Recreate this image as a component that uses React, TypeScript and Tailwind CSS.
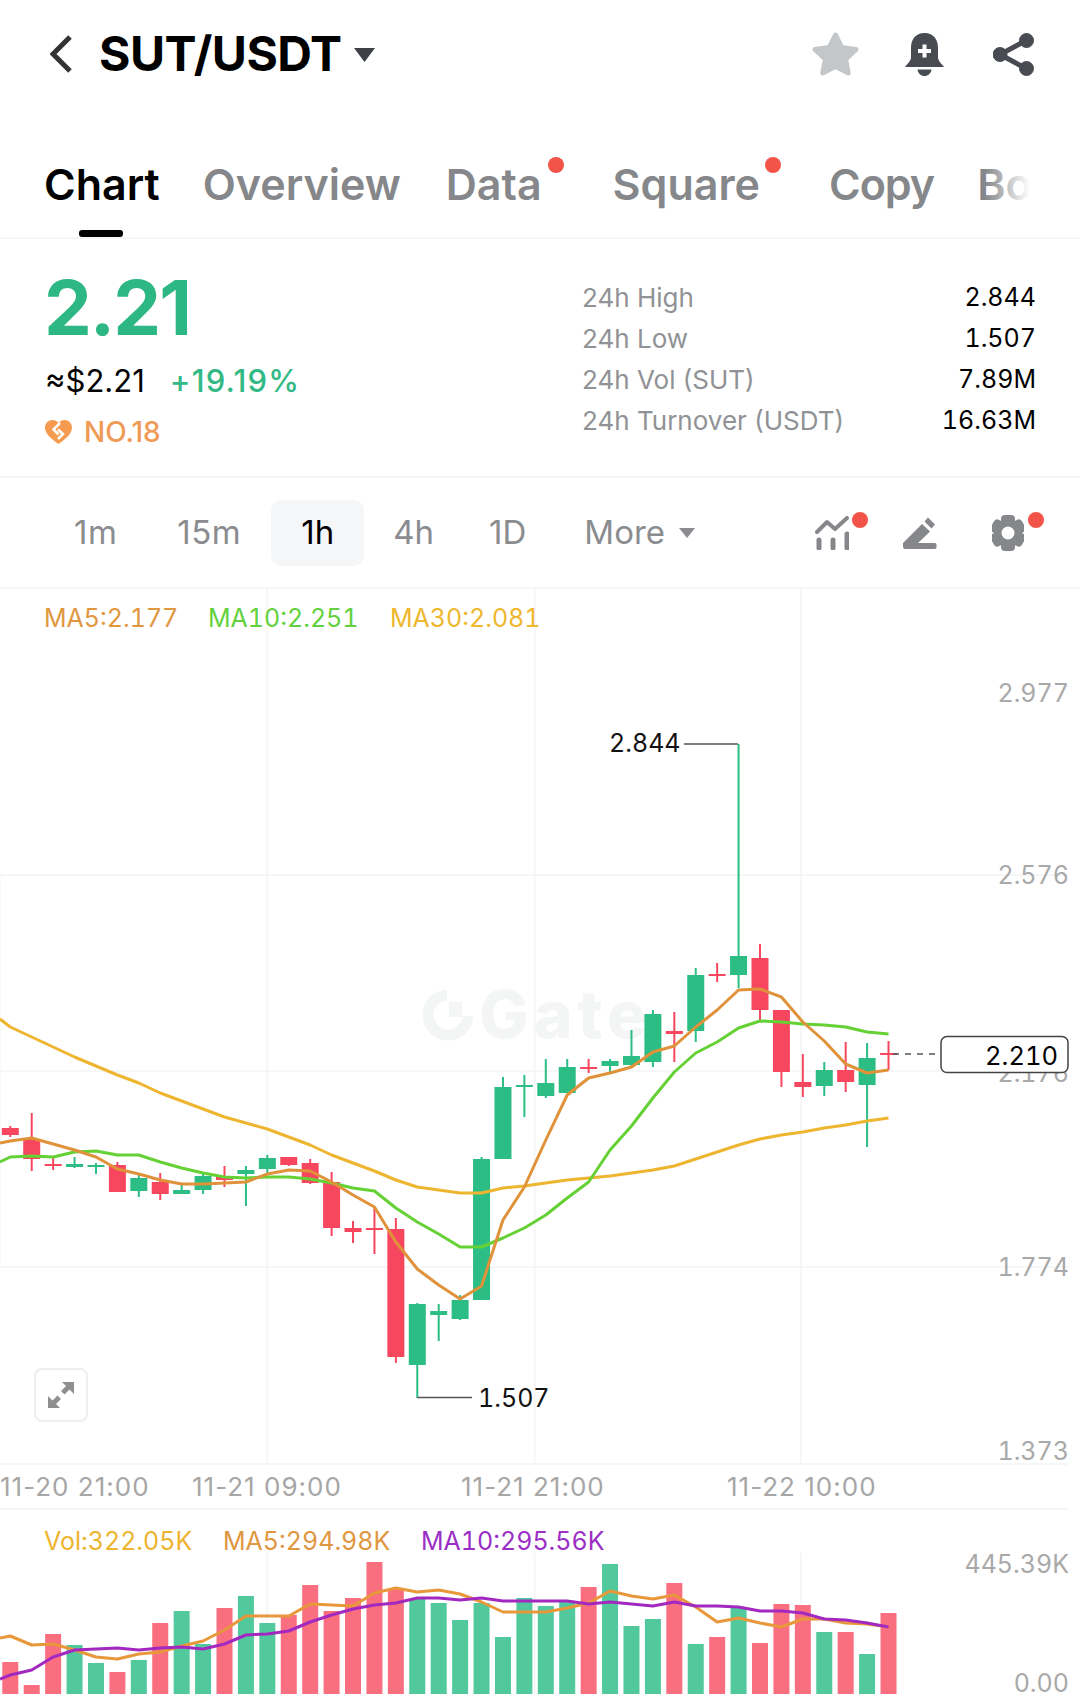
const X = (i: number) => 10.3 + 21.42 * i;
const RED = "#f6475f";
const GREEN = "#2cbd85";

// [wickTop, bodyTop, bodyBottom, wickBottom, up]
const candles: [number, number, number, number, number][] = [
  [1126, 1128, 1135, 1137, 0], [1113, 1139, 1159, 1171, 0], [1158, 1164, 1166, 1170, 0], [1157, 1164, 1167, 1168, 1],
  [1163, 1165, 1167, 1174, 1], [1162, 1165, 1192, 1192, 0], [1175, 1178, 1191, 1197, 1], [1173, 1182, 1194, 1200, 0],
  [1185, 1190, 1194, 1194, 1], [1174, 1176, 1190, 1194, 1], [1166, 1176, 1180, 1187, 0], [1166, 1170, 1174, 1206, 1],
  [1155, 1158, 1169, 1173, 1], [1157, 1157, 1165, 1166, 0], [1159, 1163, 1183, 1184, 0], [1172, 1182, 1228, 1236, 0],
  [1221, 1228, 1232, 1243, 0], [1208, 1228, 1230, 1254, 0], [1218, 1229, 1357, 1363, 0], [1303, 1304, 1365, 1398, 1],
  [1304, 1311, 1315, 1341, 1], [1295, 1300, 1319, 1320, 1], [1157, 1159, 1300, 1300, 1], [1077, 1087, 1159, 1159, 1],
  [1075, 1085, 1087, 1117, 1], [1059, 1083, 1096, 1098, 1], [1059, 1067, 1093, 1093, 1], [1059, 1067, 1069, 1073, 0],
  [1059, 1061, 1066, 1072, 1], [1030, 1056, 1065, 1066, 1], [1010, 1014, 1062, 1067, 1], [1012, 1031, 1034, 1062, 0],
  [968, 975, 1031, 1042, 1], [963, 974, 976, 982, 0], [744, 956, 975, 988, 1], [944, 958, 1010, 1020, 0],
  [1010, 1010, 1072, 1087, 0], [1054, 1082, 1087, 1097, 0], [1062, 1070, 1086, 1096, 1], [1042, 1070, 1082, 1092, 0],
  [1043, 1058, 1085, 1147, 1], [1041, 1053, 1055, 1070, 0],
];

// first value is the line at x=0
const ma5 = [1143, 1141, 1138, 1144, 1150, 1157, 1169, 1174, 1180, 1184, 1184, 1183, 1182, 1174, 1170, 1171, 1182, 1195, 1207, 1242, 1269, 1285, 1299, 1286, 1220, 1187, 1140, 1095, 1078, 1073, 1067, 1052, 1046, 1027, 1010, 990, 989, 997, 1022, 1041, 1064, 1073, 1070];
const ma10 = [1162, 1157, 1156, 1157, 1152, 1151, 1155, 1155, 1162, 1168, 1173, 1177, 1178, 1177, 1177, 1179, 1183, 1188, 1191, 1208, 1222, 1234, 1247, 1247, 1238, 1228, 1215, 1198, 1182, 1150, 1126, 1098, 1072, 1053, 1042, 1028, 1021, 1022, 1024, 1025, 1027, 1032, 1034];
const ma30 = [1019, 1027, 1037, 1047, 1057, 1066, 1075, 1083, 1093, 1101, 1109, 1117, 1123, 1129, 1137, 1145, 1155, 1163, 1171, 1180, 1187, 1190, 1193, 1193, 1188, 1186, 1183, 1180, 1178, 1176, 1173, 1170, 1166, 1159, 1152, 1145, 1139, 1135, 1132, 1128, 1125, 1121, 1118];

// page y of the volume bars
const volumes = [1662, 1685, 1634, 1645, 1663, 1672, 1660, 1623, 1611, 1644, 1608, 1596, 1623, 1615, 1585, 1611, 1598, 1562, 1589, 1599, 1603, 1620, 1603, 1637, 1598, 1606, 1602, 1587, 1564, 1626, 1619, 1583, 1644, 1637, 1608, 1643, 1604, 1605, 1632, 1632, 1654, 1613];
const volUp = [0, 0, 0, 1, 1, 0, 1, 0, 1, 1, 0, 1, 1, 0, 0, 0, 0, 0, 0, 1, 1, 1, 1, 1, 1, 1, 1, 0, 1, 1, 1, 0, 1, 0, 1, 0, 0, 0, 1, 0, 1, 0];
const volMa5 = [1638, 1636, 1645, 1644, 1650, 1657, 1659, 1654, 1652, 1646, 1641, 1630, 1616, 1616, 1616, 1604, 1605, 1606, 1593, 1588, 1592, 1590, 1594, 1602, 1612, 1612, 1612, 1608, 1603, 1591, 1596, 1599, 1595, 1607, 1622, 1618, 1623, 1627, 1619, 1619, 1623, 1624, 1627];
const volMa10 = [1679, 1675, 1670, 1657, 1650, 1649, 1648, 1650, 1648, 1647, 1649, 1644, 1635, 1634, 1631, 1622, 1615, 1609, 1605, 1603, 1598, 1598, 1600, 1598, 1601, 1601, 1601, 1601, 1604, 1602, 1604, 1606, 1602, 1606, 1606, 1607, 1611, 1611, 1613, 1619, 1620, 1623, 1627];

function linePoints(values: number[]) {
  return values.map((y, i) => `${i === 0 ? 0 : X(i - 1)},${y}`).join(" ");
}

function Dot({ className }: { className: string }) {
  return <span className={`absolute w-4 h-4 rounded-full bg-[#f2544a] ${className}`} />;
}

function Header() {
  return (
    <div className="h-[104px] flex items-center pt-1 pl-[50px] pr-[46px]">
      <svg width="24" height="38" viewBox="0 0 24 38" fill="none" stroke="#333" strokeWidth="5">
        <path d="M20 2 3 19l17 17" />
      </svg>
      <span className="ml-[25px] text-[48px] font-bold text-black leading-none tracking-[-0.5px]">SUT/USDT</span>
      <svg className="ml-3 mt-[2px]" width="21" height="14" viewBox="0 0 21 14" fill="#3d4046">
        <path d="M0 0h21L10.5 14z" />
      </svg>
      <div className="ml-auto flex items-center">
        <svg width="47" height="44" viewBox="0 0 47 44" fill="#c4c7ca" stroke="#c4c7ca" strokeWidth="5" strokeLinejoin="round">
          <path d="M23.5 3 29.8 15.6 44 17.5 33.6 27.3 36.2 41 23.5 34.4 10.8 41 13.4 27.3 3 17.5 17.2 15.6z" />
        </svg>
        <svg className="ml-[46px]" width="39" height="43" viewBox="0 0 39 43" fill="#484b51">
          <path d="M19.5 0C10 0 6 7 6 15v9c0 4-3 6-6 10h39c-3-4-6-6-6-10v-9C33 7 29 0 19.5 0zM12.5 36.500h14c-.5 4-3.500 6.500-7 6.500s-6.500-2.500-7-6.500z" />
          <path fill="#fff" d="M17.500 11.500h4v4.500H26v4h-4.500v4.500h-4V20H13v-4h4.500z" />
        </svg>
        <svg className="ml-[49px]" width="41" height="43" viewBox="0 0 41 43" fill="#484b51" stroke="#484b51">
          <path d="M33 7.500 7 21.500l26 14" fill="none" strokeWidth="5" />
          <circle cx="33.500" cy="7.500" r="7" strokeWidth="1" />
          <circle cx="33.500" cy="35.500" r="7" strokeWidth="1" />
          <circle cx="7" cy="21.500" r="7" strokeWidth="1" />
        </svg>
      </div>
    </div>
  );
}

function Tabs() {
  return (
    <div className="relative h-[135px] border-b-2 border-[#f5f6f6] flex items-start pl-[44px] pt-[54px] gap-[43px] text-[43px] leading-[52px] font-semibold text-[#85878a] overflow-hidden">
      <span className="relative text-black">
        Chart
        <span className="absolute left-[35px] top-[72px] w-[44px] h-[7px] rounded-[3px] bg-black" />
      </span>
      <span className="mr-[2px]">Overview</span>
      <span className="relative pr-[22px] mr-[6px]">
        Data
        <Dot className="right-0 top-[-1px]" />
      </span>
      <span className="relative pr-[21px] mr-[5px]">
        Square
        <Dot className="right-0 top-[-1px]" />
      </span>
      <span className="tracking-[-1px]">Copy</span>
      <span>Bo</span>
      <div className="absolute right-[50px] top-0 bottom-0 w-[45px] bg-gradient-to-r from-transparent to-white" />
      <div className="absolute right-0 top-0 bottom-0 w-[50px] bg-white" />
    </div>
  );
}

function Stats() {
  const rows = [
    ["24h High", "2.844"],
    ["24h Low", "1.507"],
    ["24h Vol (SUT)", "7.89M"],
    ["24h Turnover (USDT)", "16.63M"],
  ];
  return (
    <div className="h-[239px] border-b-2 border-[#f5f6f6] flex pl-[45px] pr-[44px]">
      <div className="w-[537px] pt-[26px]">
        <div className="text-[76px] leading-[84px] font-bold text-[#2cb784] tracking-[-2px] -ml-px">2.21</div>
        <div className="flex items-center mt-[12px] text-[31px] leading-[40px] gap-[25px]">
          <span className="text-black">≈$2.21</span>
          <span className="text-[#33b985] font-medium tracking-[1.2px]">+19.19%</span>
        </div>
        <div className="flex items-center mt-[13px] gap-[12px] text-[28px] leading-[36px] font-medium text-[#ef9a55]">
          <svg width="27" height="24" viewBox="0 0 27 24">
            <path fill="#f59a4f" d="M13.500 24C8 20 0 14.500 0 7.500 0 3 3.500 0 7.500 0c2.500 0 4.500 1 6 3 1.500-2 3.500-3 6-3C23.500 0 27 3 27 7.500 27 14.500 19 20 13.500 24z" />
            <path fill="none" stroke="#fff" strokeWidth="2.500" d="M15 3 8.500 9.500l5 5M13 9.500l5 4.500-5 5" />
          </svg>
          <span>NO.18</span>
        </div>
      </div>
      <div className="flex-1 pt-[38px] text-[26px] leading-[41px]">
        {rows.map(([label, value]) => (
          <div key={label} className="flex justify-between">
            <span className="text-[#909295]">{label}</span>
            <span className="text-black text-[25px] tabular-nums">{value}</span>
          </div>
        ))}
      </div>
    </div>
  );
}

function Intervals() {
  return (
    <div className="h-[111px] border-b-2 border-[#f5f6f6] flex items-center text-[33px] text-[#8a8c8f]">
      <span className="ml-[74px] tracking-[0.5px]">1m</span>
      <span className="ml-[60px] tracking-[0.5px]">15m</span>
      <span className="ml-[30px] w-[93px] h-[66px] rounded-[10px] bg-[#f5f6f7] text-black flex items-center justify-center">1h</span>
      <span className="ml-[29px]">4h</span>
      <span className="ml-[55px]">1D</span>
      <span className="ml-[58px]">More</span>
      <svg className="ml-[14px]" width="16" height="10" viewBox="0 0 16 10" fill="#8a8c8f">
        <path d="M0 0h16L8 10z" />
      </svg>
      <span className="relative ml-[120px] w-[34px] h-[34px]">
        <svg width="34" height="34" viewBox="0 0 34 34" fill="none" stroke="#85878a" strokeWidth="4" strokeLinecap="round">
          <path d="M2 16 12 6l8 7L32 2" strokeLinejoin="round" />
          <path d="M4 24v8M18 24v8M32 18v14" strokeWidth="5" />
        </svg>
        <Dot className="left-[37px] top-[-4px]" />
      </span>
      <svg className="ml-[54px]" width="34" height="34" viewBox="0 0 34 34" fill="#85878a">
        <path d="M0 27 19 8l8 7.500L15 27h17q1.500 0 1.500 2v2q0 2-1.500 2H2q-2 0-2-2z" />
        <path d="M21.500 5.500 25 1.500l7 7-3.500 4z" />
      </svg>
      <span className="relative ml-[55px] w-[32px] h-[36px]">
        <svg width="32" height="36" viewBox="0 0 32 36" fill="#85878a">
          <rect x="9" y="0" width="14" height="36" rx="4" />
          <rect x="9" y="0" width="14" height="36" rx="4" transform="rotate(60 16 18)" />
          <rect x="9" y="0" width="14" height="36" rx="4" transform="rotate(120 16 18)" />
          <circle cx="16" cy="18" r="12" />
          <circle cx="16" cy="18" r="6.500" fill="#fff" />
        </svg>
        <Dot className="left-[36px] top-[-3px]" />
      </span>
    </div>
  );
}

function PriceChart() {
  return (
    <div className="relative h-[874px]">
      <svg className="block overflow-visible tabular-nums" width="1080" height="874" viewBox="0 589 1080 874">
        <line x1="0.5" x2="0.5" y1="875" y2="1267" stroke="#f8f9f9" strokeWidth="1" />
        {[267, 534.7, 801].map((x) => (
          <line key={x} x1={x} x2={x} y1="589" y2="1463" stroke="#f3f4f5" strokeWidth="1.500" />
        ))}
        {[875.3, 1071, 1267].map((y) => (
          <line key={y} x1="0" x2="1068" y1={y} y2={y} stroke="#f3f4f5" strokeWidth="1.500" />
        ))}

        {/* watermark */}
        <path d="M447 995a20 20 0 1 0 21 21" fill="none" stroke="#f4f5f5" strokeWidth="11" />
        <rect x="449" y="1002" width="13" height="15" fill="#f4f5f5" />
        <text x="479" y="1038" fontSize="66" fontWeight="800" letterSpacing="5" fill="#f4f5f5">Gate</text>

        <text x="44" y="627" fontSize="25" fill="#e0973f">MA5:2.177</text>
        <text x="208" y="627" fontSize="25" fill="#63d13d">MA10:2.251</text>
        <text x="390" y="627" fontSize="25" fill="#eeb72f">MA30:2.081</text>

        <g fontSize="25" fill="#a9a9a9" textAnchor="end">
          <text x="1069" y="702">2.977</text>
          <text x="1069" y="884">2.576</text>
          <text x="1069" y="1082">2.176</text>
          <text x="1069" y="1276">1.774</text>
          <text x="1069" y="1460">1.373</text>
        </g>

        {candles.map(([top, bodyTop, bodyBottom, bottom, up], i) => {
          const color = up ? GREEN : RED;
          return (
            <g key={i} fill={color}>
              <rect x={X(i) - 1} y={top} width="2" height={bottom - top} />
              <rect x={X(i) - 8.5} y={bodyTop} width="17" height={Math.max(bodyBottom - bodyTop, 2)} />
            </g>
          );
        })}

        <g fill="none" strokeWidth="3" strokeLinejoin="round">
          <polyline points={linePoints(ma30)} stroke="#eeb530" />
          <polyline points={linePoints(ma10)} stroke="#65d135" />
          <polyline points={linePoints(ma5)} stroke="#e0923a" />
        </g>

        {/* high / low markers */}
        <path d="M684 744h54" stroke="#555" strokeWidth="1.500" fill="none" />
        <text x="609" y="752" fontSize="25" fill="#111">2.844</text>
        <path d="M417.300 1397.500H472" stroke="#555" strokeWidth="1.500" fill="none" />
        <text x="478" y="1407" fontSize="25" fill="#111">1.507</text>

        {/* last price */}
        <path d="M893 1054h48" stroke="#555" strokeWidth="1.500" strokeDasharray="6 6" />
        <rect x="941" y="1036.500" width="127" height="36" rx="6" fill="#fff" stroke="#444" strokeWidth="1.500" />
        <text x="1058" y="1065" fontSize="25.500" fill="#000" textAnchor="end">2.210</text>
      </svg>
      <div className="absolute left-[34px] top-[779px] w-[54px] h-[54px] rounded-[8px] border-2 border-[#eeeeee] bg-white flex items-center justify-center">
        <svg width="26" height="26" viewBox="0 0 26 26" fill="#8f8f8f">
          <path d="M14 0h12v12l-4.500-4.500-5 5-3.500-3.500 5-5zM12 26H0V14l4.500 4.500 5-5 3.500 3.500-5 5z" />
        </svg>
      </div>
    </div>
  );
}

function TimeAxis() {
  return (
    <div className="h-[47px] border-t-2 border-b-2 border-[#f5f6f6] w-[1068px] flex items-center text-[26px] text-[#a6a6a6] tracking-[1px] whitespace-nowrap">
      <span className="w-[192px]">11-20 21:00</span>
      <span className="w-[269px]">11-21 09:00</span>
      <span className="w-[266px]">11-21 21:00</span>
      <span>11-22 10:00</span>
    </div>
  );
}

function VolumeChart() {
  return (
    <svg className="block tabular-nums" width="1080" height="184" viewBox="0 1510 1080 184">
      {[267, 534.7, 801].map((x) => (
        <line key={x} x1={x} x2={x} y1="1553" y2="1694" stroke="#f3f4f5" strokeWidth="1.500" />
      ))}
      <text x="44" y="1550" fontSize="25" fill="#edb42f">Vol:322.05K</text>
      <text x="223" y="1550" fontSize="25" fill="#e0973f">MA5:294.98K</text>
      <text x="421" y="1550" fontSize="25" fill="#9b2fc5">MA10:295.56K</text>
      <g fontSize="25" fill="#a9a9a9" textAnchor="end">
        <text x="1069" y="1573">445.39K</text>
        <text x="1069" y="1692">0.00</text>
      </g>
      {volumes.map((top, i) => (
        <rect key={i} x={X(i) - 8} y={top} width="16" height={1694 - top} fill={volUp[i] ? "#52c99c" : "#fa6f80"} />
      ))}
      <g fill="none" strokeWidth="3" strokeLinejoin="round">
        <polyline points={linePoints(volMa5)} stroke="#e8973a" />
        <polyline points={linePoints(volMa10)} stroke="#a228c0" />
      </g>
    </svg>
  );
}

export default function App() {
  return (
    <div className="w-[1080px] h-[1694px] overflow-hidden bg-white [font-family:Inter,sans-serif]">
      <Header />
      <Tabs />
      <Stats />
      <Intervals />
      <PriceChart />
      <TimeAxis />
      <VolumeChart />
    </div>
  );
}
